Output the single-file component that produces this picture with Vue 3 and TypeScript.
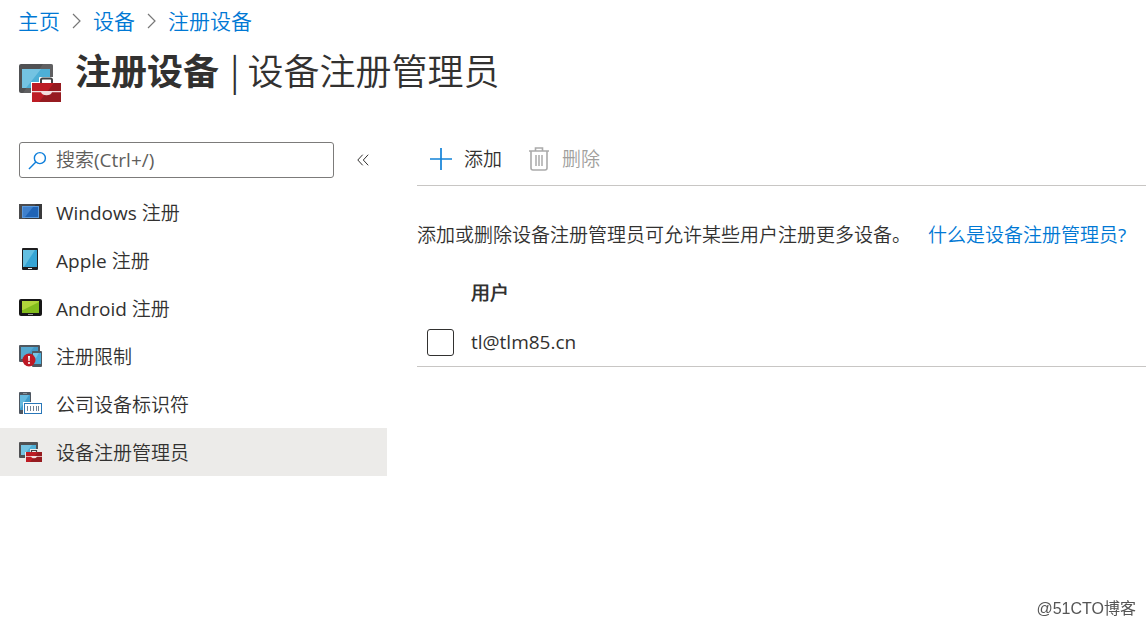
<script setup lang="ts">
import { ref } from 'vue'

interface MenuItem {
  id: string
  label: string
}

const crumbs: string[] = ['主页', '设备', '注册设备']

const menu: MenuItem[] = [
  { id: 'windows', label: 'Windows 注册' },
  { id: 'apple', label: 'Apple 注册' },
  { id: 'android', label: 'Android 注册' },
  { id: 'limits', label: '注册限制' },
  { id: 'identifiers', label: '公司设备标识符' },
  { id: 'managers', label: '设备注册管理员' },
]

const active = ref('managers')
const query = ref('')
const users = ref([{ name: 'tl@tlm85.cn', checked: false }])
</script>

<template>
  <div class="page">
    <nav class="crumbs" aria-label="breadcrumb">
      <template v-for="(crumb, i) in crumbs" :key="crumb">
        <svg v-if="i > 0" class="chevron" viewBox="0 0 9 16" aria-hidden="true">
          <path d="M1 1l7 7-7 7" fill="none" stroke="#777" stroke-width="1.2" />
        </svg>
        <a href="#">{{ crumb }}</a>
      </template>
    </nav>

    <header class="heading">
      <svg class="heading-icon" viewBox="0 0 42 38" aria-hidden="true">
        <rect width="34" height="29" rx="2" fill="#505153" />
        <path d="M24 0h8a2 2 0 0 1 2 2v27H4z" fill="#6b6c6e" opacity=".55" />
        <rect x="3" y="5" width="28" height="19" fill="#4eafd6" />
        <path d="M3 5h19L7 24H3z" fill="#74c3e2" />
        <path d="M12 38V18h8v-4q0-1 1-1h13q1 0 1 1v4h7v20z" fill="#fff" />
        <path d="M22 19v-3q0-1.500 1.500-1.500h8q1.500 0 1.500 1.500v3" fill="none" stroke="#414244" stroke-width="2" />
        <path d="M13 19h29v19H13z" fill="#bd1c24" />
        <path d="M35 19h7v19H20z" fill="#961b20" />
        <path d="M13 27h29v1.200h-9q-1 3-5.500 3t-5.500-3h-9z" fill="#f2dede" />
      </svg>
      <h1><strong>注册设备</strong> | 设备注册管理员</h1>
    </header>

    <div class="columns">
      <aside class="sidebar">
        <div class="search-row">
          <label class="search">
            <svg class="search-icon" viewBox="0 0 20 20" aria-hidden="true">
              <circle cx="12.500" cy="7.500" r="5.800" fill="none" stroke="#0f7fdb" stroke-width="1.500" />
              <path d="M8.300 11.700L1 19" stroke="#0f7fdb" stroke-width="1.500" />
            </svg>
            <input v-model="query" type="text" placeholder="搜索(Ctrl+/)" aria-label="搜索" />
          </label>
          <button class="collapse" type="button" aria-label="折叠">
            <svg viewBox="0 0 12 12" aria-hidden="true">
              <path d="M5.700 .7L.8 6l4.900 5.300M11.200 .7L6.300 6l4.900 5.300" fill="none" stroke="#323130" stroke-width="1" />
            </svg>
          </button>
        </div>

        <nav class="menu">
          <a
            v-for="item in menu"
            :key="item.id"
            href="#"
            :class="{ active: item.id === active }"
            @click.prevent="active = item.id"
          >
            <svg v-if="item.id === 'windows'" viewBox="0 0 24 24" aria-hidden="true">
              <rect x="0" y="4" width="23" height="15" fill="#4b4b4d" />
              <path d="M17 4h6v15H6z" fill="#39393b" />
              <rect x="3" y="6" width="17" height="12" fill="#5a9ade" />
              <rect x="4" y="7" width="15" height="10" fill="#1f63b5" />
              <path d="M4 7h10L6 17H4z" fill="#3f80cc" />
            </svg>
            <svg v-else-if="item.id === 'apple'" viewBox="0 0 24 24" aria-hidden="true">
              <rect x="3" y="0" width="16" height="22" rx="1" fill="#1e1e20" />
              <rect x="4" y="2" width="14" height="17" fill="#35a4d4" />
              <path d="M4 2h12L5 19H4z" fill="#63bfe1" />
              <rect x="9" y="20" width="4" height="1" fill="#eee" />
            </svg>
            <svg v-else-if="item.id === 'android'" viewBox="0 0 24 24" aria-hidden="true">
              <rect x="0" y="3" width="23" height="17" rx="2" fill="#171717" />
              <rect x="3" y="5" width="17" height="12" fill="#82bc1d" />
              <path d="M3 5h17v1L4 14H3z" fill="#b1d63b" />
              <rect x="9" y="18" width="5" height="1" fill="#999" />
            </svg>
            <svg v-else-if="item.id === 'limits'" viewBox="0 0 24 24" aria-hidden="true">
              <rect x="0" y="1" width="21" height="17" rx="1" fill="#505860" />
              <rect x="2" y="3" width="17" height="12" fill="#4299c7" />
              <path d="M2 3h13L5 15H2z" fill="#56a9d1" />
              <rect x="13" y="7" width="10" height="16" rx="1" fill="#505860" />
              <rect x="14" y="9" width="8" height="11" fill="#4aaddb" />
              <path d="M14 9h6l-6 10z" fill="#75c4e4" />
              <circle cx="10" cy="16" r="6.500" fill="#bd1925" />
              <path d="M9 12h2l-.4 5H9.400z" fill="#fff" />
              <circle cx="10" cy="19" r="1.100" fill="#fff" />
            </svg>
            <svg v-else-if="item.id === 'identifiers'" viewBox="0 0 24 24" aria-hidden="true">
              <rect x="0" y="0" width="12" height="22" rx="1" fill="#4e5660" />
              <rect x="1" y="3" width="10" height="15" fill="#409dcc" />
              <path d="M1 3h9L1 17z" fill="#65b9de" />
              <rect x="4" y="1" width="4" height="1" fill="#89929a" />
              <path d="M4 10h20v13H4z" fill="#fff" />
              <rect x="5.500" y="11.500" width="17" height="10" fill="#fff" stroke="#2977b9" />
              <path d="M8.500 14v5M11.500 14v5M14.500 14v5M17.500 14v5M19.500 14v5" stroke="#718194" />
            </svg>
            <svg v-else viewBox="0 0 24 24" aria-hidden="true">
              <rect x="0" y="2" width="19" height="16" rx="1" fill="#505153" />
              <rect x="2" y="5" width="15" height="10" fill="#4eafd6" />
              <path d="M2 5h11L5 15H2z" fill="#74c3e2" />
              <path d="M6 22V12h5V9h9v3h4v10z" fill="#ecebe9" />
              <path d="M12.500 12.500V10.500h5v2" fill="none" stroke="#414244" stroke-width="1.200" />
              <path d="M7 12h16v10H7z" fill="#bd1c24" />
              <path d="M19 12h4v10H11z" fill="#961b20" />
              <path d="M7 16h16v.7h-5q-1 1.500-3 1.500t-3-1.500H7z" fill="#f2dede" />
            </svg>
            <span>{{ item.label }}</span>
          </a>
        </nav>
      </aside>

      <main class="content">
        <div class="toolbar">
          <button type="button">
            <svg viewBox="0 0 24 24" aria-hidden="true">
              <path d="M12 1v22M1 12h22" stroke="#1282d8" stroke-width="1.700" />
            </svg>
            添加
          </button>
          <button type="button" disabled>
            <svg viewBox="0 0 24 24" aria-hidden="true">
              <path d="M2 4h20M8.500 4V1h7v3M4 4v17q0 2 2 2h12q2 0 2-2V4" fill="none" stroke="#aaa" stroke-width="1.600" />
              <path d="M9 8v11M12 8v11M15 8v11" stroke="#aaa" stroke-width="1.500" />
            </svg>
            删除
          </button>
        </div>

        <p class="intro">
          添加或删除设备注册管理员可允许某些用户注册更多设备。
          <a href="#">什么是设备注册管理员?</a>
        </p>

        <table class="users">
          <thead>
            <tr>
              <td class="pick"></td>
              <th scope="col">用户</th>
            </tr>
          </thead>
          <tbody>
            <tr v-for="(user, i) in users" :key="user.name">
              <td class="pick">
                <input :id="`user-${i}`" v-model="user.checked" type="checkbox" />
              </td>
              <td>
                <label :for="`user-${i}`">{{ user.name }}</label>
              </td>
            </tr>
          </tbody>
        </table>
      </main>
    </div>

    <div class="watermark">@51CTO博客</div>
  </div>
</template>

<style>
body {
  margin: 0;
  background: #fff;
}
</style>

<style scoped>
.page {
  box-sizing: border-box;
  min-height: 100vh;
  padding-top: 7px;
  color: #323130;
  font-family: 'Open Sans', 'Noto Sans CJK SC DemiLight', 'Noto Sans CJK SC', sans-serif;
  font-size: 19px;
  font-weight: 400;
  line-height: 28px;
}

a {
  color: #0078d4;
  text-decoration: none;
}

button {
  padding: 0;
  border: 0;
  background: none;
  color: inherit;
  font: inherit;
}

.crumbs {
  display: flex;
  align-items: center;
  gap: 12px;
  padding-left: 18px;
  font-size: 21px;
}

.chevron {
  width: 9px;
  height: 16px;
}

.heading {
  display: flex;
  align-items: flex-start;
  gap: 14px;
  height: 72px;
  padding-left: 19px;
}

.heading-icon {
  width: 42px;
  height: 38px;
  margin-top: 29px;
}

h1 {
  margin: 0;
  font-family: 'Noto Sans CJK SC', sans-serif;
  font-size: 36px;
  font-weight: 350;
  line-height: 68px;
}

h1 strong {
  margin-right: 3px;
  font-weight: 700;
}

.columns {
  display: flex;
  gap: 30px;
  padding-top: 25px;
}

.sidebar {
  flex: 0 0 387px;
}

.search-row {
  display: flex;
  align-items: center;
  gap: 23px;
  padding: 10px 0 10px 19px;
}

.search {
  display: flex;
  align-items: center;
  gap: 9px;
  box-sizing: border-box;
  width: 315px;
  height: 36px;
  padding: 0 8px;
  border: 1px solid #7c7b7a;
  border-radius: 3px;
}

.search-icon {
  flex: none;
  width: 19px;
  height: 19px;
}

.search input {
  flex: 1;
  min-width: 0;
  padding: 0;
  border: 0;
  outline: 0;
  background: none;
  color: inherit;
  font: inherit;
}

.search input::placeholder {
  color: #605e5c;
  opacity: 1;
}

.collapse {
  display: flex;
}

.collapse svg {
  width: 12px;
  height: 12px;
}

.menu a {
  display: flex;
  align-items: center;
  gap: 13px;
  height: 48px;
  padding-left: 19px;
  color: inherit;
}

.menu a.active {
  background: #ecebe9;
}

.menu svg {
  flex: none;
  width: 24px;
  height: 24px;
}

.menu span {
  padding-top: 2px;
}

.content {
  flex: 1;
  min-width: 0;
}

.toolbar {
  display: flex;
  gap: 25px;
  box-sizing: border-box;
  height: 54px;
  padding-left: 12px;
  border-bottom: 1px solid #c8c6c4;
}

.toolbar button {
  display: flex;
  align-items: center;
  gap: 11px;
}

.toolbar button:disabled {
  color: #a19f9d;
}

.toolbar svg {
  width: 24px;
  height: 24px;
}

.intro {
  margin: 35px 0 30px;
  white-space: nowrap;
}

.intro a {
  margin-left: 12px;
}

.users {
  width: 100%;
  border-collapse: collapse;
  text-align: left;
}

.users td,
.users th {
  padding: 0;
}

.users th {
  height: 28px;
  font-weight: 700;
}

.users tbody td {
  height: 59px;
  padding-top: 12px;
  box-sizing: border-box;
  border-bottom: 1px solid #c8c6c4;
}

.users .pick {
  width: 44px;
  padding-left: 10px;
}

.users input {
  display: block;
  appearance: none;
  box-sizing: border-box;
  width: 27px;
  height: 27px;
  margin: 0;
  border: 1px solid #323130;
  border-radius: 3px;
}

.watermark {
  position: fixed;
  right: 10px;
  bottom: 7px;
  color: #555;
  font-family: 'Liberation Sans', 'Noto Sans CJK SC', sans-serif;
  font-size: 16px;
  line-height: 22px;
}
</style>
